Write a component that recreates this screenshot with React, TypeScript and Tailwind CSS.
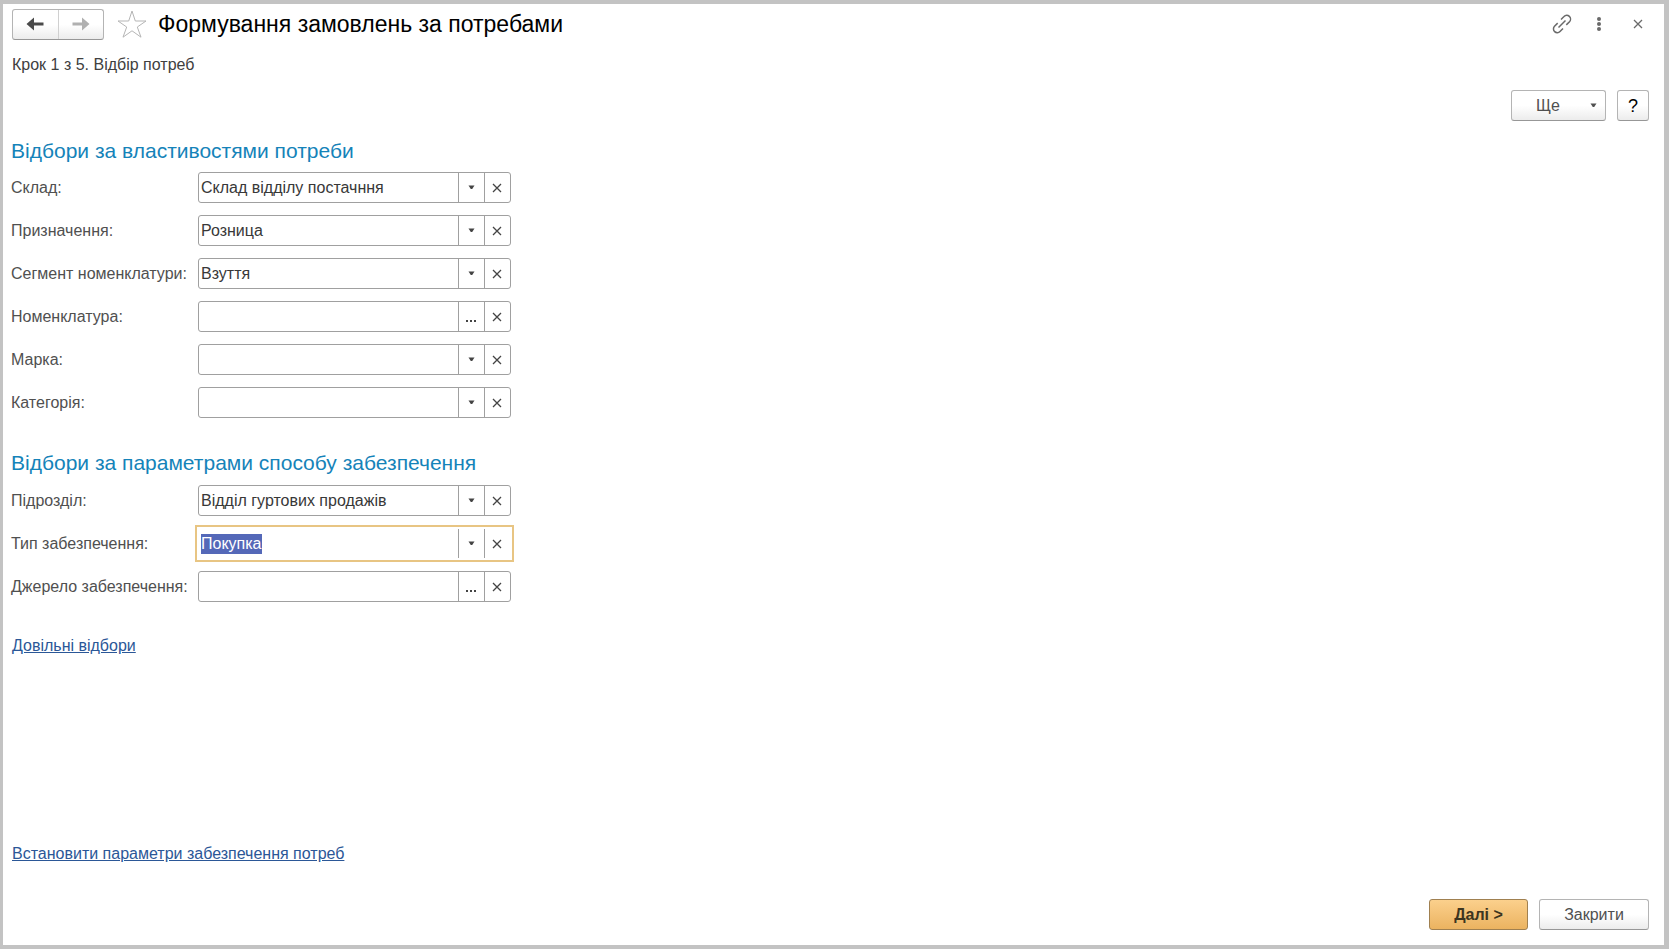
import { useEffect, useRef } from "react"

interface FieldProps {
  id: string
  label: string
  value?: string
  picker?: "list" | "dialog"
  active?: boolean
}

const sideButton = "flex w-[26px] shrink-0 items-center justify-center border-l border-[#a0a0a0] pr-px text-[#444]"
const plainButton =
  "flex h-[31px] items-center justify-center rounded-[3px] border border-[#b4b4b4] border-b-[#979797] bg-linear-to-b from-white from-50% to-[#ececec]"

function CaretIcon() {
  return (
    <svg width="7" height="5" viewBox="0 0 7 5" fill="currentColor" aria-hidden="true">
      <path d="M0.5 0.5h6L4.200 4h-1.400z" />
    </svg>
  )
}

function CrossIcon() {
  return (
    <svg width="10" height="10" viewBox="0 0 10 10" stroke="currentColor" strokeWidth="1.3" aria-hidden="true">
      <path d="M1 1l8 8M9 1l-8 8" />
    </svg>
  )
}

function Field({ id, label, value = "", picker = "list", active = false }: FieldProps) {
  const inputRef = useRef<HTMLInputElement>(null)

  useEffect(() => {
    if (active) {
      inputRef.current?.focus()
      inputRef.current?.select()
    }
  }, [active])

  return (
    <div className="flex items-center">
      <label htmlFor={id} className="w-[187px] shrink-0 whitespace-nowrap text-[#505050]">
        {label}
      </label>
      <div
        className={
          active
            ? "flex h-[31px] w-[313px] border border-transparent outline-2 outline-offset-1 outline-[#e8c583]"
            : "flex h-[31px] w-[313px] rounded-[3px] border border-[#a0a0a0]"
        }
      >
        <input
          ref={inputRef}
          id={id}
          type="text"
          defaultValue={value}
          className="min-w-0 flex-1 bg-transparent px-[2px] text-[#383838] outline-none selection:bg-[#5468b8] selection:text-white"
        />
        {picker === "list" ? (
          <button type="button" aria-label="Вибрати зі списку" className={sideButton}>
            <CaretIcon />
          </button>
        ) : (
          <button type="button" aria-label="Вибрати" className={sideButton}>
            <svg width="11" height="12" viewBox="0 0 11 12" fill="currentColor" aria-hidden="true">
              <path d="M0 9h2v2H0zM4 9h2v2H4zM8 9h2v2H8z" />
            </svg>
          </button>
        )}
        <button type="button" aria-label="Очистити" className={sideButton}>
          <CrossIcon />
        </button>
      </div>
    </div>
  )
}

function TitleBar() {
  return (
    <header className="flex h-10 items-center pl-[9px] pr-[21px]">
      <div className="flex h-[31px] w-[92px] rounded-[3px] border border-[#b4b4b4] border-b-[#979797] bg-linear-to-b from-white from-50% to-[#ececec]">
        <button type="button" aria-label="Назад" className="flex flex-1 items-center justify-center text-[#4a4a4a]">
          <svg width="18" height="14" viewBox="0 0 18 14" fill="currentColor" aria-hidden="true">
            <path d="M0.500 7L8 0.500V5.500h9.500v3H8v5z" />
          </svg>
        </button>
        <button
          type="button"
          aria-label="Вперед"
          className="flex flex-1 items-center justify-center border-l border-[#d0d0d0] text-[#b0b0b0]"
        >
          <svg width="18" height="14" viewBox="0 0 18 14" fill="currentColor" aria-hidden="true">
            <path d="M17.500 7L10 0.500V5.500H0.500v3H10v5z" />
          </svg>
        </button>
      </div>
      <button type="button" aria-label="Додати до обраного" className="ml-[13px] text-[#b5b5b5]">
        <svg width="30" height="28" viewBox="0 0 30 28" fill="none" stroke="currentColor" aria-hidden="true">
          <path d="M15 1l3.300 10H29l-8.700 6 3.700 10.200L15 20.800 6 27.200 9.700 17 1 11h10.700z" />
        </svg>
      </button>
      <h1 className="ml-[11px] flex-1 text-[23px] leading-7 text-black">Формування замовлень за потребами</h1>
      <div className="flex items-center pb-px text-[#6a6a6a]">
        <button type="button" aria-label="Отримати посилання">
          <svg width="20" height="20" viewBox="0 0 20 20" fill="none" stroke="currentColor" strokeWidth="1.5" aria-hidden="true">
            <path d="M6.500 13.500l7-7M9 5.500l3-3a3.500 3.500 0 0 1 5.500 5.200l-3.200 3.200M11 14.500l-3 3a3.500 3.500 0 0 1-5.500-5.200l3.200-3.200" />
          </svg>
        </button>
        <button type="button" aria-label="Додаткові дії" className="ml-6">
          <svg width="6" height="14" viewBox="0 0 6 14" fill="currentColor" aria-hidden="true">
            <circle cx="3" cy="2" r="2" />
            <circle cx="3" cy="7" r="2" />
            <circle cx="3" cy="12" r="2" />
          </svg>
        </button>
        <button type="button" aria-label="Закрити вікно" className="ml-[31px]">
          <CrossIcon />
        </button>
      </div>
    </header>
  )
}

export default function App() {
  return (
    <div className="flex min-h-screen flex-col border-y-4 border-r-[5px] border-l-[3px] border-[#c3c3c3] bg-white font-['Liberation_Sans',Arial,sans-serif] text-base leading-5">
      <TitleBar />
      <main className="flex flex-1 flex-col pl-2 pr-[15px]">
        <p className="mt-[11px] pl-px text-[#404040]">Крок 1 з 5. Відбір потреб</p>

        <div className="mt-[15px] flex justify-end gap-[11px]">
          <button type="button" className={`${plainButton} w-[95px] pr-2 pl-6 text-[#505050]`}>
            <span className="flex-1 text-left">Ще</span>
            <CaretIcon />
          </button>
          <button type="button" aria-label="Довідка" className={`${plainButton} w-8 text-lg text-black`}>
            ?
          </button>
        </div>

        <section>
          <h2 className="mt-4 text-[21px] leading-7 text-[#1583b9]">Відбори за властивостями потреби</h2>
          <div className="mt-[7px] flex flex-col gap-3">
            <Field id="warehouse" label="Склад:" value="Склад відділу постачння" />
            <Field id="purpose" label="Призначення:" value="Розница" />
            <Field id="segment" label="Сегмент номенклатури:" value="Взуття" />
            <Field id="item" label="Номенклатура:" picker="dialog" />
            <Field id="brand" label="Марка:" />
            <Field id="category" label="Категорія:" />
          </div>
        </section>

        <section>
          <h2 className="mt-[31px] text-[21px] leading-7 text-[#1583b9]">Відбори за параметрами способу забезпечення</h2>
          <div className="mt-2 flex flex-col gap-3">
            <Field id="department" label="Підрозділ:" value="Відділ гуртових продажів" />
            <Field id="supply-type" label="Тип забезпечення:" value="Покупка" active />
            <Field id="supply-source" label="Джерело забезпечення:" picker="dialog" />
          </div>
        </section>

        <a href="#filters" className="mt-[34px] self-start pl-px text-[#2b5797] underline">
          Довільні відбори
        </a>

        <div className="mt-auto flex flex-col">
          <a href="#parameters" className="self-start pl-px text-[#2b5797] underline">
            Встановити параметри забезпечення потреб
          </a>
          <div className="mt-[35px] mb-[15px] flex justify-end gap-[11px]">
            <button
              type="button"
              className="h-[31px] w-[99px] rounded-[3px] border border-[#a08050] bg-linear-to-b from-[#fbd08c] to-[#ebb360] font-bold text-[#3d3520]"
            >
              Далі &gt;
            </button>
            <button type="button" className={`${plainButton} w-[110px] text-[#505050]`}>
              Закрити
            </button>
          </div>
        </div>
      </main>
    </div>
  )
}
